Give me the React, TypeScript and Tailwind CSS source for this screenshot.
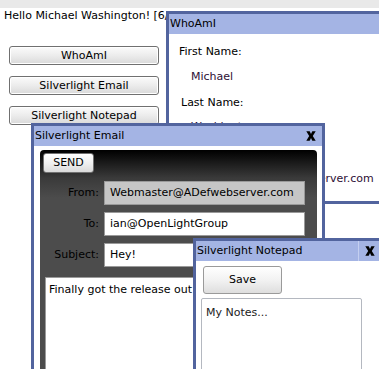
import React from 'react';

const font = "font-[family-name:'DejaVu_Sans','Verdana',sans-serif]";

function CloseIcon() {
  return (
    <svg width="10" height="10" viewBox="0 0 10 10">
      <path d="M0.3 0.3 L3.7 0.3 L5 3 L6.3 0.3 L9.7 0.3 L6.8 5 L9.7 9.7 L6.3 9.7 L5 7 L3.7 9.7 L0.3 9.7 L3.2 5 Z" fill="#000" />
    </svg>
  );
}

function PageButton({ label }: { label: string }) {
  return (
    <button className="h-[19px] w-[150px] rounded-[3px] border border-[#707070] bg-[linear-gradient(to_bottom,#fbfbfb,#ececec_50%,#d9d9d9)] text-[11px] leading-none text-black shadow-[inset_0_0_0_1px_#ffffff]">
      {label}
    </button>
  );
}

function TitleBar({ title, close, divider }: { title: string; close?: boolean; divider?: boolean }) {
  return (
    <div className="flex h-[20px] items-center bg-[#a4b4e4] pl-[1px] text-[11px] text-black">
      <span className="flex-1 whitespace-nowrap">{title}</span>
      {close && (
        <div className={`flex h-full items-center px-[6px] ${divider ? 'border-l border-[#c4cff0]' : ''}`}>
          <CloseIcon />
        </div>
      )}
    </div>
  );
}

function WhoAmIWindow() {
  return (
    <div className="absolute left-[166px] top-[11px] h-[193px] w-[240px] border-[3px] border-[#52649e] bg-white">
      <TitleBar title="WhoAmI" />
      <div className="flex flex-col pt-[11px] text-[11px] leading-[14px]">
        <span className="pl-[10px] text-black">First Name:</span>
        <span className="pl-[22px] pt-[11px] text-[#2e0f35]">Michael</span>
        <span className="pl-[12px] pt-[12px] text-black">Last Name:</span>
        <span className="pl-[22px] pt-[10px] text-[#2e0f35]">Washington</span>
        <span className="pl-[12px] pt-[13px] text-black">Email:</span>
        <span className="whitespace-nowrap pl-[21px] pt-[11px] text-[#2e0f35]">Webmaster@ADefwebserver.com</span>
      </div>
    </div>
  );
}

function Field({ label, value, gray }: { label: string; value: string; gray?: boolean }) {
  return (
    <div className="flex items-center">
      <span className="w-[57px] pr-[1px] text-right text-[11px] text-black">{label}</span>
      <div
        className={`ml-[4px] flex h-[24px] w-[201px] items-center border border-[#9a9a9a] px-[5px] text-[11px] text-black ${
          gray ? 'bg-[#c6c6c6]' : 'bg-white'
        }`}
      >
        <span className="whitespace-nowrap">{value}</span>
      </div>
    </div>
  );
}

function EmailWindow() {
  return (
    <div className="absolute left-[31px] top-[123px] h-[260px] w-[294px] border-[3px] border-[#52649e] bg-white">
      <TitleBar title="Silverlight Email" close />
      <div className="px-[6px] pr-[5px] pt-[4px]">
        <div className="flex h-[240px] flex-col rounded-t-[4px] bg-[linear-gradient(to_bottom,#000000,#3a3a3a_28px,#4c4c4c_48px,#4c4c4c)] pl-[3px]">
          <button className="mt-[3px] h-[21px] w-[51px] rounded-[3px] border border-[#707070] bg-[linear-gradient(to_bottom,#ffffff,#f0f0f0_50%,#dadada)] text-[11px] text-black">
            SEND
          </button>
          <div className="mt-[8px] flex flex-col gap-[7px]">
            <Field label="From:" value="Webmaster@ADefwebserver.com" gray />
            <Field label="To:" value="ian@OpenLightGroup" />
            <Field label="Subject:" value="Hey!" />
          </div>
          <div className="ml-[2px] mt-[10px] h-[120px] w-[257px] whitespace-nowrap border border-[#9a9a9a] bg-white px-[3px] pt-[4px] text-[11px] text-black">
            Finally got the release out
          </div>
        </div>
      </div>
    </div>
  );
}

function NotepadWindow() {
  return (
    <div className="absolute left-[193px] top-[238px] h-[160px] w-[191px] border-[3px] border-[#52649e] bg-white">
      <TitleBar title="Silverlight Notepad" close divider />
      <div className="flex flex-col pl-[7px] pt-[5px]">
        <button className="h-[28px] w-[79px] rounded-[3px] border border-[#9a9a9a] bg-[linear-gradient(to_bottom,#ffffff,#f2f2f2_50%,#dedede)] text-[11px] text-black">
          Save
        </button>
        <div className="-ml-[2px] mt-[4px] h-[100px] w-[161px] rounded-[2px] border border-[#b4b8c0] px-[4px] pt-[6px] text-[11px] text-[#222]">
          My Notes...
        </div>
      </div>
    </div>
  );
}

export default function App() {
  return (
    <div className={`relative h-[369px] w-[379px] overflow-hidden bg-white ${font}`}>
      <div className="h-[8px] bg-[#e9e9e9]" />
      <div className="w-[166px] overflow-hidden whitespace-nowrap pl-[4px] pt-[1px] text-[11px] leading-[14px] text-black">
        Hello Michael Washington! [6/22/2009 10:14:37 AM]
      </div>
      <div className="mt-[23px] flex flex-col gap-[11px] pl-[9px]">
        <PageButton label="WhoAmI" />
        <PageButton label="Silverlight Email" />
        <PageButton label="Silverlight Notepad" />
      </div>
      <WhoAmIWindow />
      <EmailWindow />
      <NotepadWindow />
    </div>
  );
}
